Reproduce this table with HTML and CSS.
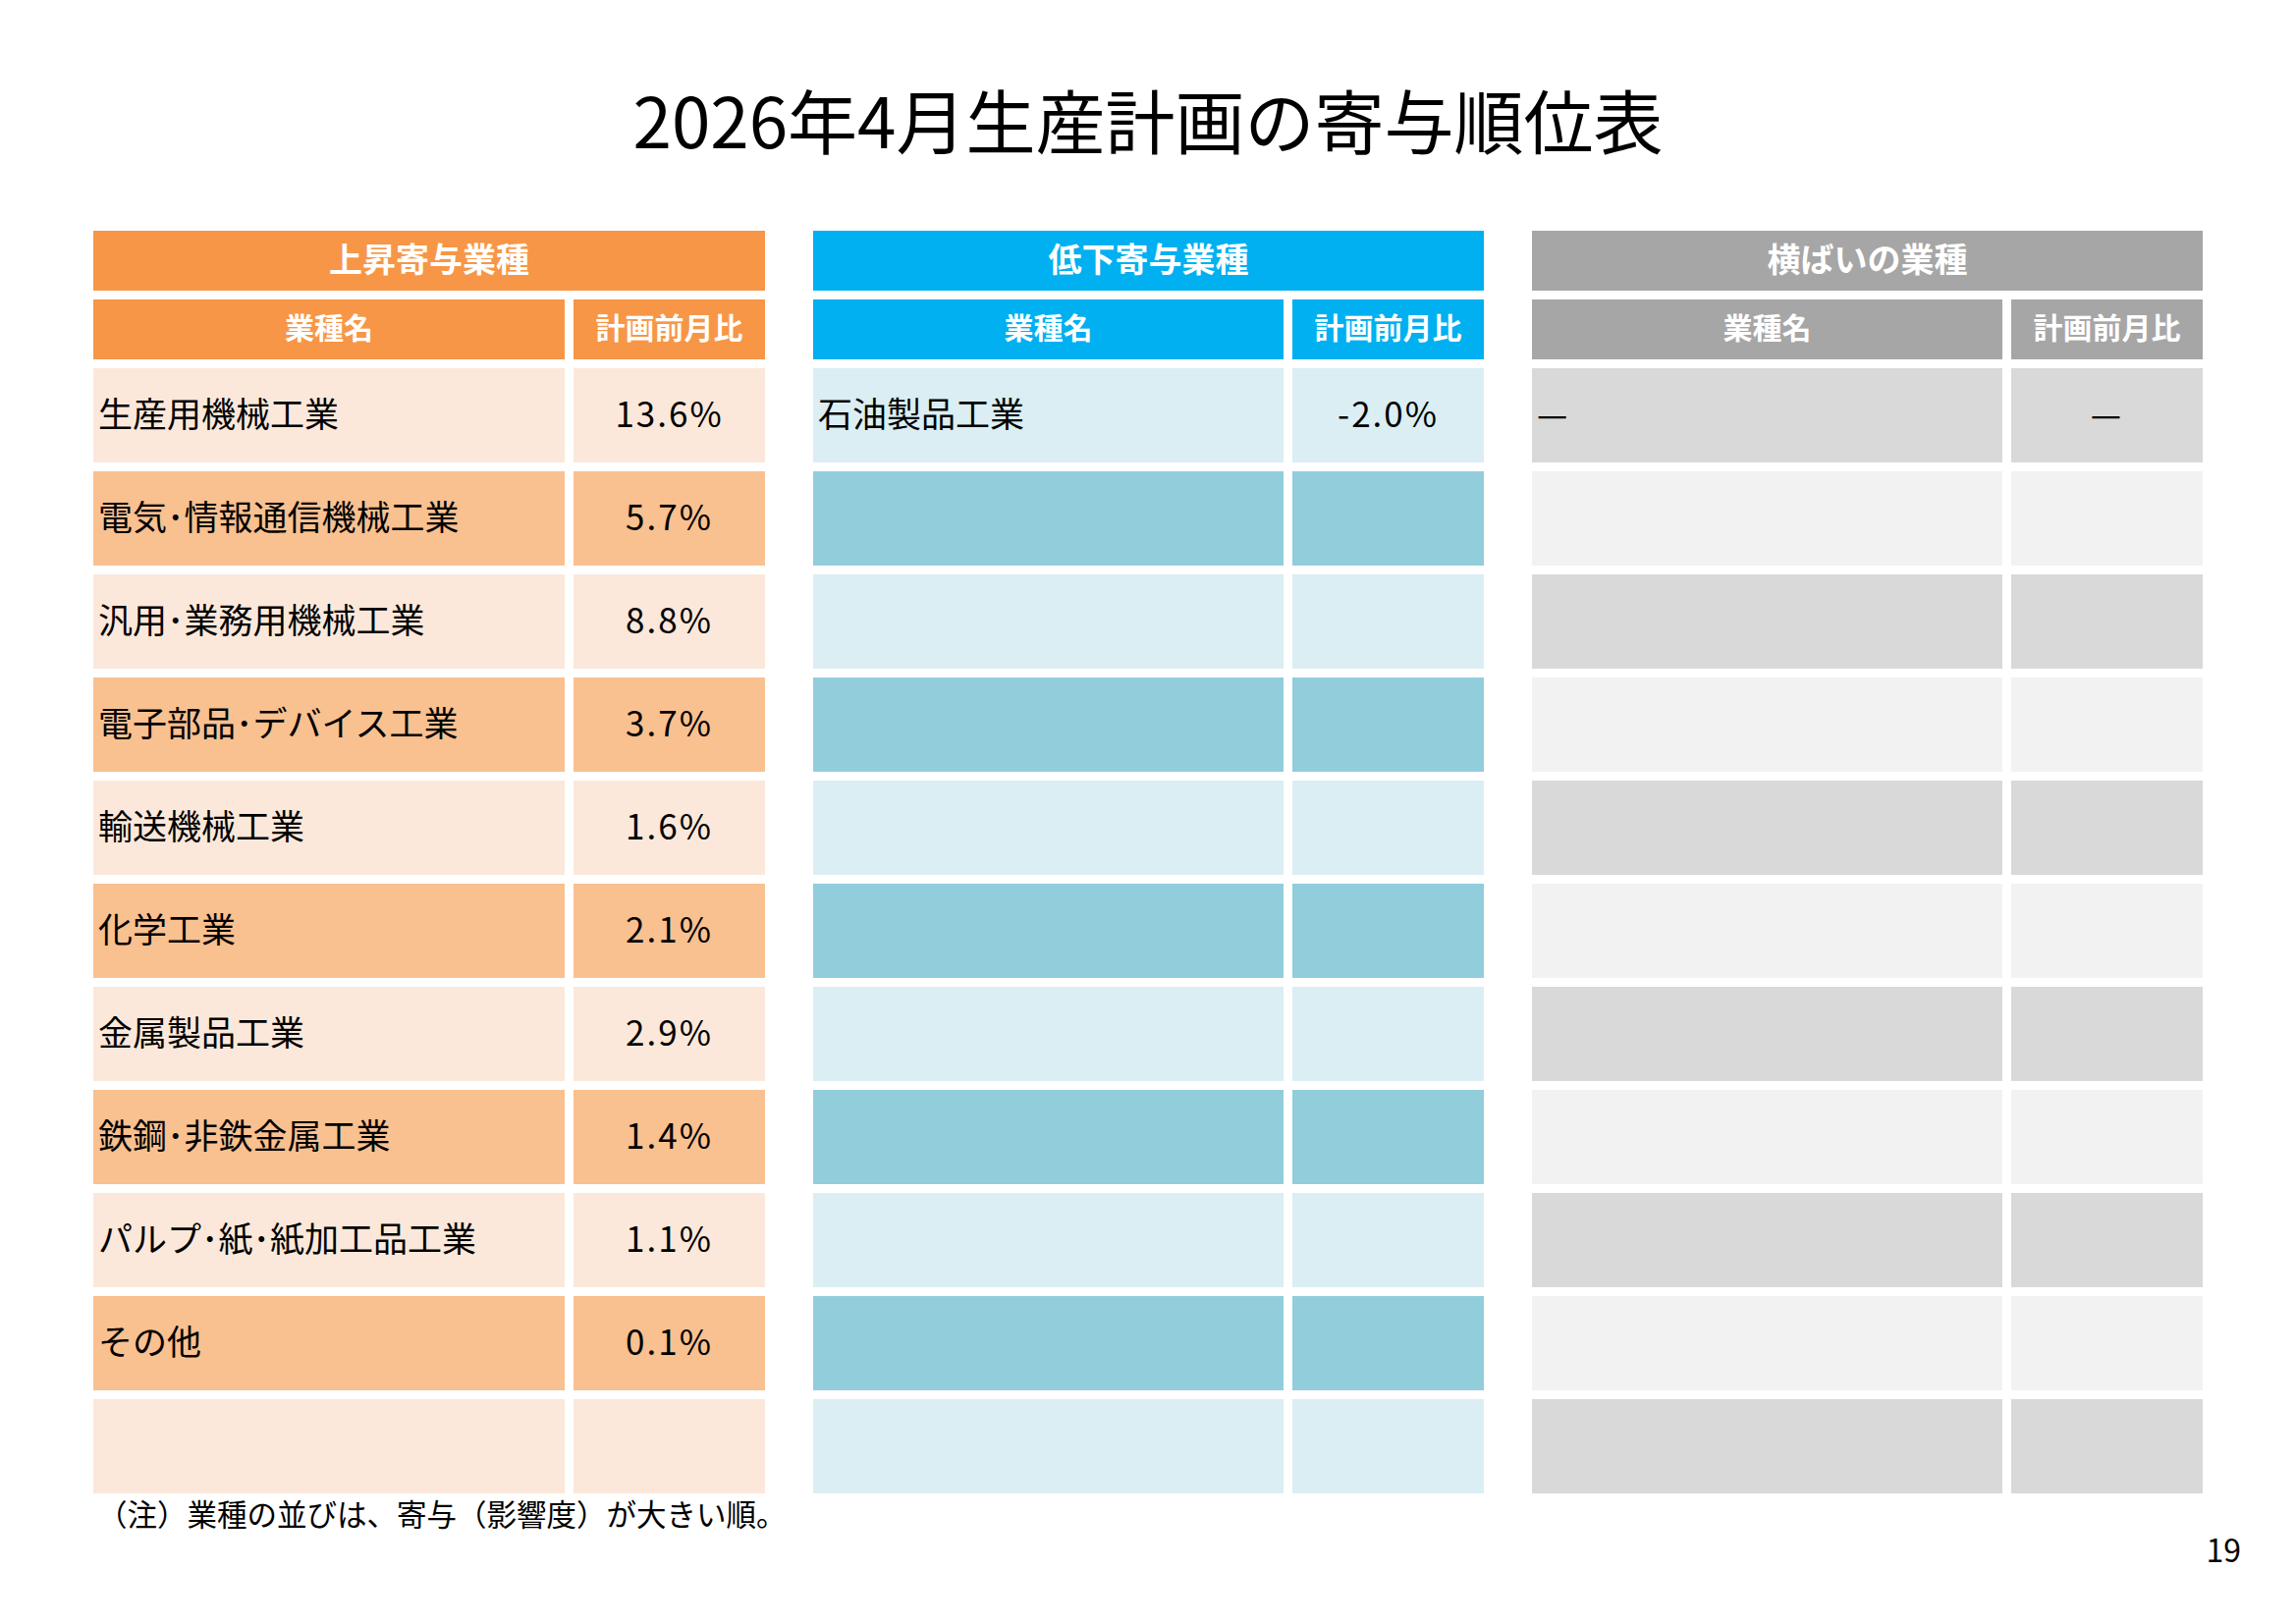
FILE: index.html
```html
<!DOCTYPE html>
<html lang="ja">
<head>
<meta charset="utf-8">
<title>2026年4月生産計画の寄与順位表</title>
<link rel="stylesheet" href="styles.css">
</head>
<body>
<div class="page">
  <h1 class="title">2026年4月生産計画の寄与順位表</h1>
  <div class="tables">
    <div class="tbl up">
      <div class="cap">上昇寄与業種</div>
      <div class="sub">業種名</div><div class="sub">計画前月比</div>
      <div class="c name l">生産用機械工業</div><div class="c val l">13.6%</div>
      <div class="c name d">電気･情報通信機械工業</div><div class="c val d">5.7%</div>
      <div class="c name l">汎用･業務用機械工業</div><div class="c val l">8.8%</div>
      <div class="c name d">電子部品･デバイス工業</div><div class="c val d">3.7%</div>
      <div class="c name l">輸送機械工業</div><div class="c val l">1.6%</div>
      <div class="c name d">化学工業</div><div class="c val d">2.1%</div>
      <div class="c name l">金属製品工業</div><div class="c val l">2.9%</div>
      <div class="c name d">鉄鋼･非鉄金属工業</div><div class="c val d">1.4%</div>
      <div class="c name l">パルプ･紙･紙加工品工業</div><div class="c val l">1.1%</div>
      <div class="c name d">その他</div><div class="c val d">0.1%</div>
      <div class="c name l"></div><div class="c val l"></div>
    </div>
    <div class="tbl down">
      <div class="cap">低下寄与業種</div>
      <div class="sub">業種名</div><div class="sub">計画前月比</div>
      <div class="c name l">石油製品工業</div><div class="c val l">-2.0%</div>
      <div class="c name d"></div><div class="c val d"></div>
      <div class="c name l"></div><div class="c val l"></div>
      <div class="c name d"></div><div class="c val d"></div>
      <div class="c name l"></div><div class="c val l"></div>
      <div class="c name d"></div><div class="c val d"></div>
      <div class="c name l"></div><div class="c val l"></div>
      <div class="c name d"></div><div class="c val d"></div>
      <div class="c name l"></div><div class="c val l"></div>
      <div class="c name d"></div><div class="c val d"></div>
      <div class="c name l"></div><div class="c val l"></div>
    </div>
    <div class="tbl flat">
      <div class="cap">横ばいの業種</div>
      <div class="sub">業種名</div><div class="sub">計画前月比</div>
      <div class="c name d">—</div><div class="c val d">—</div>
      <div class="c name l"></div><div class="c val l"></div>
      <div class="c name d"></div><div class="c val d"></div>
      <div class="c name l"></div><div class="c val l"></div>
      <div class="c name d"></div><div class="c val d"></div>
      <div class="c name l"></div><div class="c val l"></div>
      <div class="c name d"></div><div class="c val d"></div>
      <div class="c name l"></div><div class="c val l"></div>
      <div class="c name d"></div><div class="c val d"></div>
      <div class="c name l"></div><div class="c val l"></div>
      <div class="c name d"></div><div class="c val d"></div>
    </div>
  </div>
  <p class="note">（注）業種の並びは、寄与（影響度）が大きい順。</p>
  <div class="pageno">19</div>
</div>
</body>
</html>
```

FILE: styles.css
```css
* { box-sizing: border-box; }
html, body {
  margin: 0;
  padding: 0;
  background: #ffffff;
}
body {
  width: 2338px;
  height: 1654px;
  overflow: hidden;
  font-family: "Noto Sans CJK JP", "Noto Sans", sans-serif;
  color: #000000;
}
.page {
  padding-top: 84px;
}
.title {
  margin: 0 0 79px 0;
  font-size: 71px;
  line-height: 72px;
  height: 72px;
  font-weight: 400;
  text-align: center;
}
.tables {
  display: flex;
  gap: 49px;
  padding-left: 95px;
}
.tbl {
  width: 684px;
  display: grid;
  grid-template-columns: 1fr 195px;
  grid-template-rows: 61px 61px repeat(11, 96px);
  gap: 9px;
}
.tbl.down, .tbl.flat { width: 683px; }
.cap {
  grid-column: 1 / 3;
  color: #ffffff;
  font-weight: 700;
  font-size: 34px;
  display: flex;
  align-items: center;
  justify-content: center;
  padding-bottom: 6px;
}
.sub {
  color: #ffffff;
  font-weight: 700;
  font-size: 30px;
  display: flex;
  align-items: center;
  justify-content: center;
  padding-bottom: 8px;
}
.c {
  display: flex;
  align-items: center;
  font-size: 35px;
  padding-bottom: 8px;
}
.name { padding-left: 5px; }
.val { justify-content: center; letter-spacing: 2px; }

.up .cap, .up .sub { background: #f79646; }
.up .l { background: #fbe8da; }
.up .d { background: #f9c090; }

.down .cap, .down .sub { background: #00b0f0; }
.down .l { background: #daeef3; }
.down .d { background: #92cddc; }

.flat .cap, .flat .sub { background: #a6a6a6; }
.flat .l { background: #f2f2f2; }
.flat .d { background: #d9d9d9; }

.note {
  margin: 5px 0 0 0;
  padding-left: 99px;
  font-size: 30.5px;
  line-height: 30px;
  height: 30px;
}
.pageno {
  margin-top: 5px;
  padding-right: 56px;
  text-align: right;
  font-size: 32px;
  line-height: 32px;
}
```
